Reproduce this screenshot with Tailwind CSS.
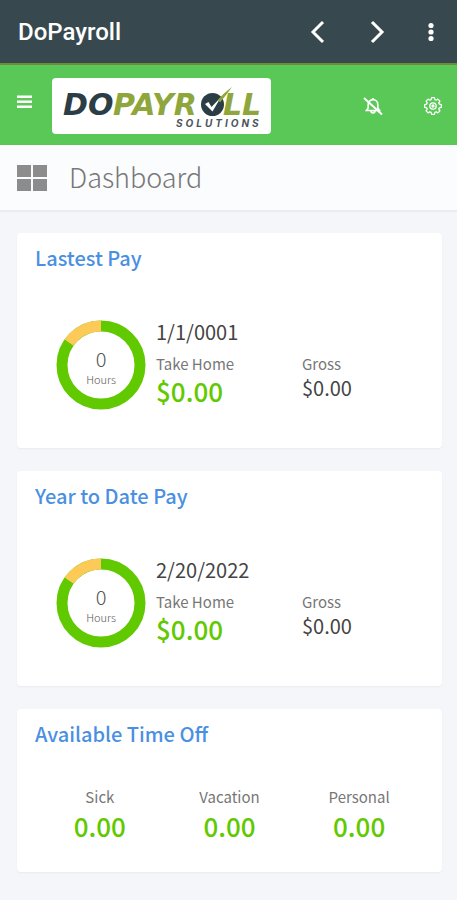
<!DOCTYPE html>
<html lang="en">
<head>
<meta charset="utf-8">
<meta name="viewport" content="width=device-width, initial-scale=1">
<title>DoPayroll</title>
<script src="https://cdn.jsdelivr.net/npm/@tailwindcss/browser@4"></script>
</head>
<body class="min-h-screen bg-[#f4f6fa] font-['Noto_Sans_CJK_SC',sans-serif] text-[#555]">
<header>
  <div class="flex h-[65px] items-center justify-between border-b-2 border-[#6f8a3c] bg-[#37494f] pl-[18px] pr-5 text-white">
    <span class="font-[Roboto,sans-serif] text-2xl font-medium">DoPayroll</span>
    <nav class="flex items-center gap-9" aria-label="Browser">
      <button type="button" aria-label="Back" class="h-6 w-6"><svg viewBox="0 0 24 24" class="h-6 w-6" fill="none" stroke="currentColor" stroke-width="3"><path d="M18 2 8 12 18 22"/></svg></button>
      <button type="button" aria-label="Forward" class="h-6 w-6"><svg viewBox="0 0 24 24" class="h-6 w-6" fill="none" stroke="currentColor" stroke-width="3"><path d="M7 2 17 12 7 22"/></svg></button>
      <button type="button" aria-label="More" class="h-6 w-3"><svg viewBox="0 0 12 24" class="h-6 w-3" fill="currentColor"><circle cx="6" cy="5.500" r="2.600"/><circle cx="6" cy="12" r="2.600"/><circle cx="6" cy="18.500" r="2.600"/></svg></button>
    </nav>
  </div>
  <div class="flex h-20 items-center bg-[#59c857] pl-4 pr-[14px] pt-[2px] text-white">
    <button type="button" aria-label="Menu" class="mb-2 h-4 w-4"><svg viewBox="0 0 16 16" class="h-4 w-4" fill="currentColor"><path d="M1 1.500h15v2.600H1zM1 6.500h15v2.600H1zM1 11.500h15v2.600H1z"/></svg></button>
    <a href="#" aria-label="DoPayroll Solutions" class="ml-5 block rounded bg-white">
      <svg viewBox="0 0 219 56" class="h-14 w-[219px]" font-style="italic">
        <g font-family="DejaVu Sans, sans-serif" font-size="30" font-weight="700">
          <text x="11" y="37" fill="#2b3d45">DO</text>
          <text x="61" y="37" fill="#8fa63c">PAYR</text>
          <text x="171" y="37" fill="#8fa63c">LL</text>
        </g>
        <circle cx="160.500" cy="26.500" r="11.500" fill="#2b3d45"/>
        <path d="M153 26 156.500 24 159.500 29 169 19 160.500 33.500Z" fill="#fff"/>
        <path d="M166 22Q171 15.500 180 9Q174 17.500 168 24.500Z" fill="#8fa63c"/>
        <text x="124" y="49" font-family="Inter, sans-serif" font-size="10" font-weight="700" letter-spacing="3" fill="#4a555b">SOLUTIONS</text>
      </svg>
    </a>
    <div class="ml-auto flex items-center gap-10">
      <button type="button" aria-label="Notifications off" class="h-5 w-5"><svg viewBox="0 0 20 20" class="h-5 w-5" fill="none" stroke="currentColor" stroke-width="1.700"><path d="M3.500 14.500h13L14.800 12V8.500A4.800 4.800 0 0 0 10 3.700 4.800 4.800 0 0 0 5.200 8.500V12ZM8 14.800a2 2 0 0 0 4 0M10 2v2"/><path d="M1 2 19 18.500" stroke-width="2"/></svg></button>
      <button type="button" aria-label="Settings" class="h-5 w-5"><svg viewBox="0 0 20 20" class="h-5 w-5" fill="none" stroke="currentColor" stroke-width="1.300" stroke-linejoin="round"><path d="M8.600 1.700h2.800l.5 2 1.200.5 1.800-1.100 2 2-1.100 1.800.5 1.200 2 .5v2.800l-2 .5-.5 1.200 1.100 1.800-2 2-1.800-1.100-1.200.5-.5 2H8.600l-.5-2-1.200-.5-1.800 1.100-2-2 1.100-1.800-.5-1.200-2-.5V8.600l2-.5.5-1.200-1.100-1.800 2-2 1.800 1.100 1.200-.5Z"/><circle cx="10" cy="10" r="3.200"/><circle cx="10" cy="10" r="1"/></svg></button>
    </div>
  </div>
</header>
<div class="flex h-[66px] items-center gap-[22px] border-b border-[#e9ebef] bg-[#fbfcfd] px-[17px] shadow-xs">
  <svg viewBox="0 0 30 26" class="h-[26px] w-[30px]" fill="#8b8c8b" aria-hidden="true"><path d="M0 0h14v12H0zM16 0h14v12H16zM0 14h14v12H0zM16 14h14v12H16z"/></svg>
  <h1 class="pb-[2px] text-[27px] leading-8 font-light text-[#777]">Dashboard</h1>
</div>
<main class="flex flex-col gap-[23px] pt-[22px] pr-[15px] pb-7 pl-[17px]">
  <section class="rounded-sm bg-white px-[18px] pt-[11px] pb-[38px] shadow-xs">
    <h2 class="text-[20px] leading-7 font-medium text-[#4a90e2]">Lastest Pay</h2>
    <div class="mt-12 flex items-start gap-[10px] pl-[21px]">
      <div class="grid h-[90px] w-[90px] shrink-0 place-items-center">
        <svg viewBox="0 0 90 90" class="col-start-1 row-start-1 h-[90px] w-[90px]" fill="none" stroke-width="11" aria-hidden="true"><circle cx="45" cy="45" r="39" stroke="#61c900"/><path d="M13.100 22.600A39 39 0 0 1 45 6" stroke="#fdca57"/></svg>
        <div class="col-start-1 row-start-1 pt-1 text-center"><div class="text-xl leading-6 font-light">0</div><div class="text-[11px] leading-4 font-light">Hours</div></div>
      </div>
      <div class="grid flex-1 grid-cols-2 items-start">
        <p class="col-span-2 text-[20px] leading-6 text-[#444]">1/1/0001</p>
        <dl class="pt-2"><dt class="text-[15px] leading-6 text-[#777]">Take Home</dt><dd class="text-[26px] leading-[30px] font-medium text-[#61c900]">$0.00</dd></dl>
        <dl class="pt-2 pl-3"><dt class="text-[15px] leading-6 text-[#777]">Gross</dt><dd class="text-[20px] leading-6 text-[#444]">$0.00</dd></dl>
      </div>
    </div>
  </section>
  <section class="rounded-sm bg-white px-[18px] pt-[11px] pb-[38px] shadow-xs">
    <h2 class="text-[20px] leading-7 font-medium text-[#4a90e2]">Year to Date Pay</h2>
    <div class="mt-12 flex items-start gap-[10px] pl-[21px]">
      <div class="grid h-[90px] w-[90px] shrink-0 place-items-center">
        <svg viewBox="0 0 90 90" class="col-start-1 row-start-1 h-[90px] w-[90px]" fill="none" stroke-width="11" aria-hidden="true"><circle cx="45" cy="45" r="39" stroke="#61c900"/><path d="M13.100 22.600A39 39 0 0 1 45 6" stroke="#fdca57"/></svg>
        <div class="col-start-1 row-start-1 pt-1 text-center"><div class="text-xl leading-6 font-light">0</div><div class="text-[11px] leading-4 font-light">Hours</div></div>
      </div>
      <div class="grid flex-1 grid-cols-2 items-start">
        <p class="col-span-2 text-[20px] leading-6 text-[#444]">2/20/2022</p>
        <dl class="pt-2"><dt class="text-[15px] leading-6 text-[#777]">Take Home</dt><dd class="text-[26px] leading-[30px] font-medium text-[#61c900]">$0.00</dd></dl>
        <dl class="pt-2 pl-3"><dt class="text-[15px] leading-6 text-[#777]">Gross</dt><dd class="text-[20px] leading-6 text-[#444]">$0.00</dd></dl>
      </div>
    </div>
  </section>
  <section class="rounded-sm bg-white px-[18px] pt-[11px] pb-[31px] shadow-xs">
    <h2 class="text-[20px] leading-7 font-medium text-[#4a90e2]">Available Time Off</h2>
    <dl class="mt-[35px] grid grid-cols-3 text-center">
      <div><dt class="text-[15px] leading-7 text-[#777]">Sick</dt><dd class="text-[26px] leading-[30px] font-medium text-[#61c900]">0.00</dd></div>
      <div><dt class="text-[15px] leading-7 text-[#777]">Vacation</dt><dd class="text-[26px] leading-[30px] font-medium text-[#61c900]">0.00</dd></div>
      <div><dt class="text-[15px] leading-7 text-[#777]">Personal</dt><dd class="text-[26px] leading-[30px] font-medium text-[#61c900]">0.00</dd></div>
    </dl>
  </section>
</main>
</body>
</html>
